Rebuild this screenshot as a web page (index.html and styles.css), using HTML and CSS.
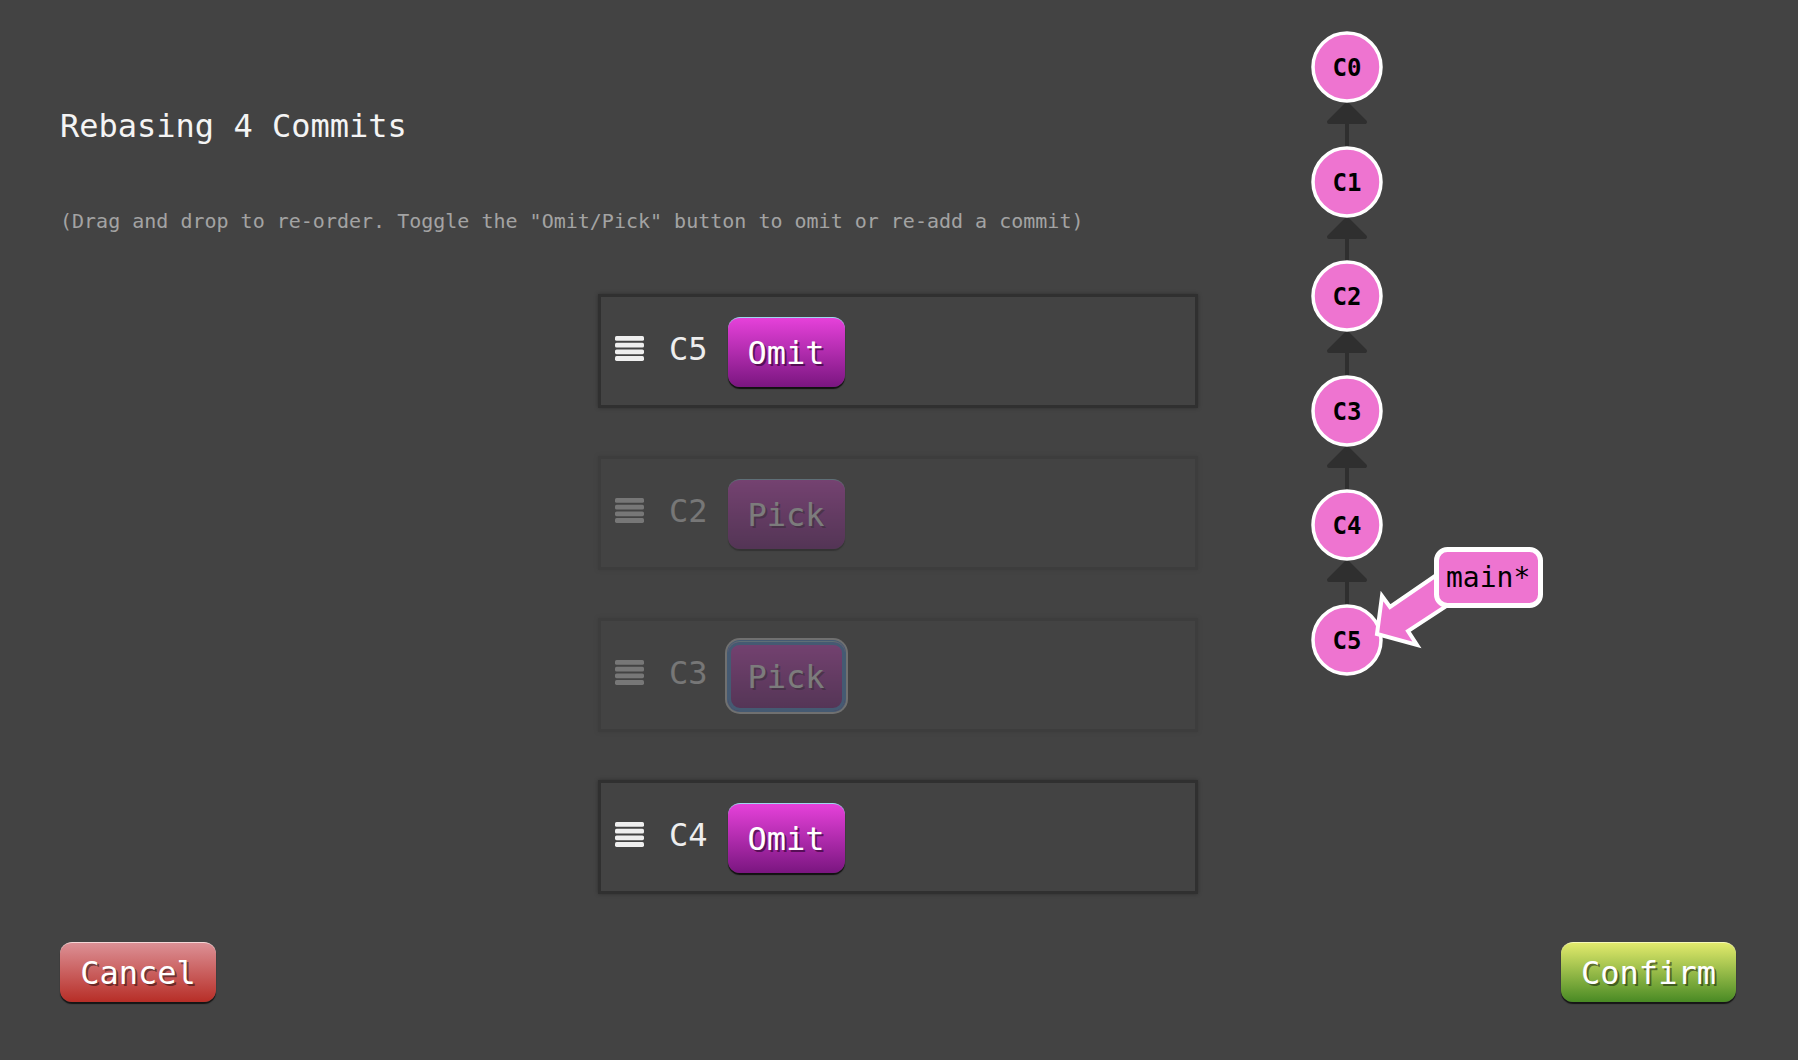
FILE: index.html
```html
<!DOCTYPE html>
<html lang="en">
<head>
<meta charset="utf-8">
<title>Rebasing 4 Commits</title>
<link rel="stylesheet" href="styles.css">
</head>
<body>
<div class="page">
  <h1 class="title">Rebasing 4 Commits</h1>
  <p class="hint">(Drag and drop to re-order. Toggle the "Omit/Pick" button to omit or re-add a commit)</p>
  <ul class="commit-list">
    <li class="commit">
      <svg class="grip" viewBox="0 0 29 25" width="29" height="25"><rect x="0" y="0" width="29" height="4.8" rx="1.6"/><rect x="0" y="6.7" width="29" height="4.8" rx="1.6"/><rect x="0" y="13.4" width="29" height="4.8" rx="1.6"/><rect x="0" y="20.1" width="29" height="4.8" rx="1.6"/></svg>
      <span class="commit-id">C5</span>
      <button class="toggle">Omit</button>
    </li>
    <li class="commit faded">
      <svg class="grip" viewBox="0 0 29 25" width="29" height="25"><rect x="0" y="0" width="29" height="4.8" rx="1.6"/><rect x="0" y="6.7" width="29" height="4.8" rx="1.6"/><rect x="0" y="13.4" width="29" height="4.8" rx="1.6"/><rect x="0" y="20.1" width="29" height="4.8" rx="1.6"/></svg>
      <span class="commit-id">C2</span>
      <button class="toggle">Pick</button>
    </li>
    <li class="commit faded">
      <svg class="grip" viewBox="0 0 29 25" width="29" height="25"><rect x="0" y="0" width="29" height="4.8" rx="1.6"/><rect x="0" y="6.7" width="29" height="4.8" rx="1.6"/><rect x="0" y="13.4" width="29" height="4.8" rx="1.6"/><rect x="0" y="20.1" width="29" height="4.8" rx="1.6"/></svg>
      <span class="commit-id">C3</span>
      <button class="toggle focused">Pick</button>
    </li>
    <li class="commit">
      <svg class="grip" viewBox="0 0 29 25" width="29" height="25"><rect x="0" y="0" width="29" height="4.8" rx="1.6"/><rect x="0" y="6.7" width="29" height="4.8" rx="1.6"/><rect x="0" y="13.4" width="29" height="4.8" rx="1.6"/><rect x="0" y="20.1" width="29" height="4.8" rx="1.6"/></svg>
      <span class="commit-id">C4</span>
      <button class="toggle">Omit</button>
    </li>
  </ul>
  <div class="actions">
    <button class="btn cancel">Cancel</button>
    <button class="btn confirm">Confirm</button>
  </div>
</div>

<svg class="graph" width="280" height="700" viewBox="0 0 280 700">
  <g class="edge">
    <line x1="57" y1="110" x2="57" y2="150"/>
    <path d="M57 104 L75 122 L39 122 Z"/>
    <line x1="57" y1="225" x2="57" y2="264"/>
    <path d="M57 219 L75 237 L39 237 Z"/>
    <line x1="57" y1="339" x2="57" y2="379"/>
    <path d="M57 333 L75 351 L39 351 Z"/>
    <line x1="57" y1="454" x2="57" y2="493"/>
    <path d="M57 448 L75 466 L39 466 Z"/>
    <line x1="57" y1="568" x2="57" y2="608"/>
    <path d="M57 562 L75 580 L39 580 Z"/>
  </g>
  <g class="node">
    <circle cx="57" cy="67" r="34"/><text x="57" y="75.5">C0</text>
    <circle cx="57" cy="182" r="34"/><text x="57" y="190.5">C1</text>
    <circle cx="57" cy="296" r="34"/><text x="57" y="304.5">C2</text>
    <circle cx="57" cy="411" r="34"/><text x="57" y="419.5">C3</text>
    <circle cx="57" cy="525" r="34"/><text x="57" y="533.5">C4</text>
    <circle cx="57" cy="640" r="34"/><text x="57" y="648.5">C5</text>
  </g>
  <polygon class="branch-arrow" points="87,634 92,596 100,607 148,574 158,605 118,631 127,645"/>
  <rect class="branch-box" x="146.5" y="549.5" width="104" height="56" rx="11"/>
  <text class="branch-label" x="156" y="587">main*</text>
</svg>
</body>
</html>
```

FILE: styles.css
```css
html, body {
  margin: 0;
  padding: 0;
}

body {
  background: #434343;
  width: 1798px;
  height: 1060px;
  overflow: hidden;
  position: relative;
  font-family: "DejaVu Sans Mono", "Liberation Mono", monospace;
  color: #f2f2f2;
}

.page {
  padding: 106px 62px 0 60px;
  display: flex;
  flex-direction: column;
}

.title {
  margin: 0;
  font-size: 32px;
  line-height: 40px;
  font-weight: normal;
  color: #f4f4f4;
}

.hint {
  margin: 63px 0 0 0;
  font-size: 20px;
  line-height: 24px;
  color: #a3a3a3;
}

.commit-list {
  list-style: none;
  margin: 61px auto 0 auto;
  padding: 0;
  width: 600px;
  display: flex;
  flex-direction: column;
  gap: 48px;
}

.commit {
  box-sizing: border-box;
  height: 114px;
  border: 3px solid #303030;
  box-shadow: 0 0 4px rgba(0, 0, 0, 0.3);
  display: flex;
  align-items: center;
  padding-left: 14px;
}

.commit.faded {
  opacity: 0.3;
}

.grip {
  fill: #efefef;
  margin-bottom: 6px;
  flex: none;
}

.commit-id {
  font-size: 32px;
  line-height: 38px;
  margin-left: 25px;
  margin-bottom: 4px;
  color: #eeeeee;
}

.toggle {
  margin-left: 20px;
  height: 70px;
  padding: 0 20px;
  border: none;
  border-top: 1.5px solid #9fd6ee;
  border-radius: 12px;
  background: linear-gradient(#e641da, #7a1680);
  box-shadow: 0 2px 1px #111;
  font-family: "DejaVu Sans Mono", "Liberation Mono", monospace;
  font-size: 32px;
  color: #fff;
  text-shadow: 2px 2px 0 rgba(40, 0, 40, 0.6);
  margin-top: 2px;
}

.toggle.focused {
  box-shadow: inset 0 0 0 3px #4a8fe0, 0 0 0 1px #4a8fe0, 0 0 0 3px #d8d8d8;
}

.actions {
  margin-top: 48px;
  display: flex;
  justify-content: space-between;
}

.btn {
  height: 60px;
  padding: 0 20px;
  border: none;
  border-radius: 12px;
  font-family: "DejaVu Sans Mono", "Liberation Mono", monospace;
  font-size: 32px;
  color: #fff;
  text-shadow: 2px 2px 0 rgba(0, 0, 0, 0.45);
  box-shadow: 0 2px 1px #151515;
}

.cancel {
  width: 156px;
  border-top: 1.5px solid #f5d6d6;
  background: linear-gradient(#dc9095, #b72e27);
}

.confirm {
  width: 175px;
  border-top: 1.5px solid #f6f9b6;
  background: linear-gradient(#e2ea6c, #498a24);
}

.graph {
  position: absolute;
  left: 1290px;
  top: 0;
}

.edge line {
  stroke: #2f2f2f;
  stroke-width: 4;
}

.edge path {
  fill: #2f2f2f;
  stroke: #2f2f2f;
  stroke-width: 4;
  stroke-linejoin: round;
}

.node circle {
  fill: #ee74d0;
  stroke: #ffffff;
  stroke-width: 3.5;
}

.node text {
  font-family: "DejaVu Sans Mono", monospace;
  font-weight: bold;
  font-size: 24px;
  fill: #000;
  text-anchor: middle;
}

.branch-arrow {
  fill: #ee74d0;
  stroke: #ffffff;
  stroke-width: 4;
  stroke-linejoin: miter;
}

.branch-box {
  fill: #ee74d0;
  stroke: #ffffff;
  stroke-width: 5;
}

.branch-label {
  font-family: "DejaVu Sans Mono", monospace;
  font-size: 28px;
  fill: #000;
}
```
